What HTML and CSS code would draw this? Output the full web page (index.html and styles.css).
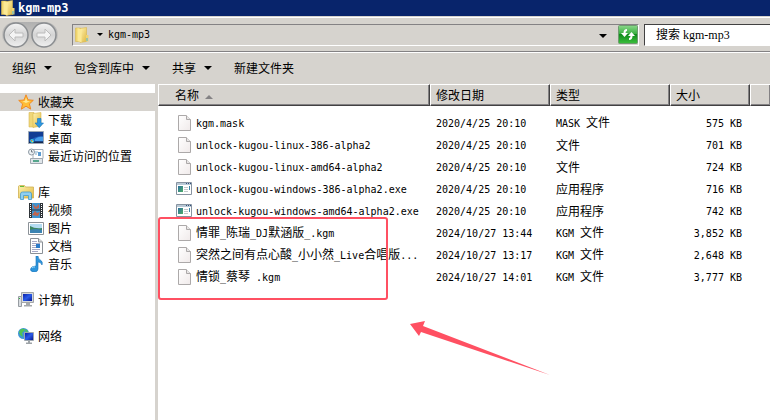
FILE: index.html
```html
<!DOCTYPE html>
<html lang="zh-CN">
<head>
    <meta charset="UTF-8">
    <meta name="viewport" content="width=device-width, initial-scale=1.0">
    <link rel="stylesheet" href="styles.css">
    <title>kgm-mp3</title>
</head>
<body>
    <!-- shared icons -->
    <svg class="icon-defs" aria-hidden="true">
        <defs>
            <linearGradient id="gold" x1="0" y1="0" x2="1" y2="1">
                <stop offset="0" stop-color="#fff3b0"/>
                <stop offset="1" stop-color="#e0b840"/>
            </linearGradient>
            <linearGradient id="screen" x1="0" y1="0" x2="1" y2="1">
                <stop offset="0" stop-color="#0a1fa8"/>
                <stop offset="0.5" stop-color="#2a5be8"/>
                <stop offset="1" stop-color="#0a1a90"/>
            </linearGradient>
            <linearGradient id="paper" x1="0" y1="0" x2="1" y2="1">
                <stop offset="0" stop-color="#ffffff"/>
                <stop offset="1" stop-color="#f0eaea"/>
            </linearGradient>
            <linearGradient id="teal" x1="0" y1="0" x2="1" y2="1">
                <stop offset="0" stop-color="#2a6f9e"/>
                <stop offset="1" stop-color="#4fae68"/>
            </linearGradient>
            <linearGradient id="green" x1="0" y1="0" x2="0" y2="1">
                <stop offset="0" stop-color="#8ad88a"/>
                <stop offset="0.45" stop-color="#3cb043"/>
                <stop offset="0.5" stop-color="#118a1c"/>
                <stop offset="1" stop-color="#3cc03c"/>
            </linearGradient>
            <linearGradient id="knob" x1="0" y1="0" x2="0" y2="1">
                <stop offset="0" stop-color="#f4f4f4"/>
                <stop offset="0.5" stop-color="#d4d4d4"/>
                <stop offset="1" stop-color="#f0f0f0"/>
            </linearGradient>
        </defs>
        <symbol id="folder" viewBox="0 0 16 16">
            <path d="M1.500 1h5v13.500h-5z" fill="#f0d56c" stroke="#d9b852" stroke-width=".6"/>
            <path d="M6 1.500L12.500.500v14L6 15.500z" fill="url(#gold)" stroke="#d8b64c" stroke-width=".6"/>
            <path d="M3.500 1l4 1.500v13l-4-1.500z" fill="#fbe995"/>
            <path d="M12 8h2.500v6.500H12z" fill="#efd472"/>
            <path d="M12.500 11h1v3h-1z" fill="#4bb4d8"/>
        </symbol>
        <symbol id="star" viewBox="0 0 16 16">
            <path d="M8 .8l2 5 5.300.5-3.900 3.600 1.300 5.200L8 12.200 3.300 15.200l1.300-5.300L.700 6.400 6 6z" fill="#ffbd35" stroke="#f08a24"/>
            <path d="M8 3.500L9.200 7 12 7.200 8 9 4.500 7.300 7 7z" fill="#ffe995"/>
        </symbol>
        <symbol id="download" viewBox="0 0 16 16">
            <path d="M1 .5h5V15H1z" fill="#f0d778" stroke="#d6b754" stroke-width=".6"/>
            <path d="M5 1.500L13 .5v13.500L5 15.500z" fill="url(#gold)" stroke="#d8b64c" stroke-width=".6"/>
            <path d="M9.500 6.500h3.500V11h2.500l-4.300 4.700L7 11h2.500z" fill="#2f97e0" stroke="#1876bd" stroke-width=".6"/>
        </symbol>
        <symbol id="desktop" viewBox="0 0 16 16">
            <path d="M.5 1.500h15v12H.5z" fill="#1f62c0" stroke="#9aa6b4"/>
            <path d="M1 2h14v4Q7 6 1 11z" fill="#123d94"/>
            <path d="M7 9q4-3 8-2v4H7z" fill="#459be8"/>
            <path d="M1 11.500h14V13H1z" fill="#16294f"/>
            <circle cx="4" cy="11" r="2" fill="#3ac0d8"/>
            <path d="M3 10h1v1H3z" fill="#f26a2c"/>
            <path d="M4 11h1v1H4z" fill="#ffd93a"/>
        </symbol>
        <symbol id="recent" viewBox="0 0 16 16">
            <path d="M5 1.500h10v9H5z" fill="#fff" stroke="#a6b0ba"/>
            <path d="M7 4h3M7 6h2" stroke="#7fa9c8"/>
            <path d="M10 4h3v4h-3z" fill="#5b9bd0"/>
            <path d="M2.500 10.500h12v5h-12z" fill="#dfe5e9" stroke="#a0a8b0"/>
            <path d="M5 12h6v2H5z" fill="#56a68c"/>
            <circle cx="3.500" cy="4" r="3" fill="#eef2f5" stroke="#8d98a2"/>
            <path d="M3.500 2v2H5" fill="none" stroke="#59646e" stroke-width=".8"/>
        </symbol>
        <symbol id="library" viewBox="0 0 16 16">
            <path d="M.5 3q0-1.500 1-1.500h5l1 1.500h8v11H.5z" fill="url(#gold)" stroke="#cfb052" stroke-width=".8"/>
            <path d="M2 2.500h4" stroke="#62bd3d"/>
            <path d="M2.500 15.500V10q0-2 2-2h7q2 0 2 2v5.500h-3V11.500H5.500v4z" fill="#8fd0f2" stroke="#449acb" stroke-width=".8"/>
        </symbol>
        <symbol id="video" viewBox="0 0 16 16">
            <path d="M1 1h14v15H1z" fill="#2e3338"/>
            <path d="M4 1h8v6.500H4zM4 8.500h8V16H4z" fill="#3f93cf"/>
            <path d="M5 2l3 3 3-3v4l-3 1-2-1zM4 13l3-4 2 2 3-1-2 4z" fill="#c0654f"/>
            <path d="M2.500 2v14M13.500 2v14" stroke="#fff" stroke-dasharray="1 1"/>
        </symbol>
        <symbol id="picture" viewBox="0 0 16 16">
            <path d="M.5 2.500h15v12H.5z" fill="#fff" stroke="#8c9298"/>
            <path d="M2 4h12v9H2z" fill="#b4dcf2"/>
            <path d="M2 6q5 3 12 2v3H2z" fill="#3b8562"/>
            <path d="M2 10q6-2 12 0v3H2z" fill="#3c84b2"/>
        </symbol>
        <symbol id="document" viewBox="0 0 16 16">
            <path d="M2.500.5h8l4 3.500v11.500h-12z" fill="#fff" stroke="#8b9197"/>
            <path d="M10.500.5V4h4" fill="#ddd" stroke="#8b9197"/>
            <path d="M4 3.500h5M4 5.500h8M4 7.500h4M4 9.500h4M4 11.500h8M4 13.500h6" stroke="#a5a8c4"/>
            <path d="M8 6h4v4H8z" fill="#2b7ac8"/>
        </symbol>
        <symbol id="music" viewBox="0 0 16 16">
            <path d="M8 0h2q0 3 3 4.500 2 1.500 1 4.500-1-3-4-3v7q0 3-4 3-4-.5-3.500-3Q3.500 10 8 10z" fill="#2d95dc" stroke="#1a74b8" stroke-width=".6"/>
            <path d="M4 12q1-1.500 3-1" stroke="#9bdcff" fill="none"/>
        </symbol>
        <symbol id="computer" viewBox="0 0 16 16">
            <path d="M.5 4.500h3v10h-3z" fill="#d8dce0" stroke="#979ca2"/>
            <path d="M1 6h1v1H1z" fill="#2fae38"/>
            <path d="M3.500.5h12v10h-12z" fill="#d5d8da" stroke="#a3a6a8"/>
            <path d="M5 2h9v7H5z" fill="url(#screen)"/>
            <path d="M8 11h4v2h2v1.500H6V13h2z" fill="#a6a9ab"/>
        </symbol>
        <symbol id="network" viewBox="0 0 16 16">
            <circle cx="5.500" cy="5.500" r="5.500" fill="#3f95d8"/>
            <path d="M3 1q3-1 4 1L4 5l1 4-3-2-1-3zM7 1l3 2-2 3z" fill="#4fc552"/>
            <path d="M6.500 4.500h9v8h-9z" fill="#dde3ea" stroke="#9ca5af"/>
            <path d="M7 5h8v7H7z" fill="url(#screen)"/>
            <path d="M10 13h2v1.500h2V16H8v-1.500h2z" fill="#9ea3a7"/>
        </symbol>
        <symbol id="file" viewBox="0 0 16 16">
            <path d="M2.500.5H10L14.500 4.500v11h-12z" fill="url(#paper)" stroke="#aca9a9"/>
            <path d="M10.500.5v4h4" fill="#e8e6e6" stroke="#aca9a9"/>
        </symbol>
        <symbol id="exe" viewBox="0 0 16 16">
            <path d="M.5 1.500h15v12H.5z" fill="#fff" stroke="#8793a0"/>
            <path d="M1 2h14v2H1z" fill="#b9c9d6"/>
            <path d="M10 2.500h1M12 2.500h1M14 2.500h1" stroke="#33507c"/>
            <path d="M2 5h5v6H2z" fill="url(#teal)"/>
            <path d="M8 6.500h4M8 8.500h4M8 10.500h4" stroke="#c3c8cc"/>
            <path d="M13 5h1v4h-1z" fill="#3b86a8"/>
        </symbol>
    </svg>

    <div class="window">
        <header class="title-bar">
            <svg class="icon"><use href="#folder"/></svg>
            <span class="en">kgm-mp3</span>
        </header>

        <div class="address-bar">
            <div class="nav-buttons">
                <button type="button" aria-label="后退">
                    <svg viewBox="0 0 26 26"><circle cx="13" cy="13" r="12" fill="url(#knob)" stroke="#8a8d90" stroke-width="1.500"/><path d="M6 13l6-6v4h8v4h-8v4z" fill="#f4f4f4" stroke="#bcbcbc"/></svg>
                </button>
                <button type="button" aria-label="前进">
                    <svg viewBox="0 0 26 26"><circle cx="13" cy="13" r="12" fill="url(#knob)" stroke="#8a8d90" stroke-width="1.500"/><path d="M20 13l-6-6v4H6v4h8v4z" fill="#f4f4f4" stroke="#bcbcbc"/></svg>
                </button>
            </div>
            <div class="path-box">
                <svg class="icon"><use href="#folder"/></svg>
                <button type="button" class="crumb"><span class="arrow small"></span><span class="en">kgm-mp3</span></button>
                <button type="button" class="history" aria-label="以前的位置"><span class="arrow"></span></button>
                <button type="button" class="refresh" aria-label="刷新">
                    <svg viewBox="0 0 20 19"><rect x=".5" y=".5" width="19" height="18" rx="1" fill="url(#green)" stroke="#6f9a70"/><path d="M9 4Q5.500 4 5.500 8H3l3.500 4L10 8H7.500Q7.500 6 9 6zM11 15q3.500 0 3.500-4H17l-3.500-4L10 11h2.500q0 2-1.500 2z" fill="#fff"/></svg>
                </button>
            </div>
            <input type="text" class="search" aria-label="搜索" placeholder="搜索 kgm-mp3">
        </div>

        <div class="toolbar">
            <button type="button">组织<span class="arrow"></span></button>
            <button type="button">包含到库中<span class="arrow"></span></button>
            <button type="button">共享<span class="arrow"></span></button>
            <button type="button">新建文件夹</button>
        </div>

        <div class="content">
            <nav class="sidebar">
                <div class="group">
                    <a href="#" class="parent selected"><svg class="icon"><use href="#star"/></svg>收藏夹</a>
                    <a href="#"><svg class="icon"><use href="#download"/></svg>下载</a>
                    <a href="#"><svg class="icon"><use href="#desktop"/></svg>桌面</a>
                    <a href="#"><svg class="icon"><use href="#recent"/></svg>最近访问的位置</a>
                </div>
                <div class="group">
                    <a href="#" class="parent"><svg class="icon"><use href="#library"/></svg>库</a>
                    <a href="#"><svg class="icon"><use href="#video"/></svg>视频</a>
                    <a href="#"><svg class="icon"><use href="#picture"/></svg>图片</a>
                    <a href="#"><svg class="icon"><use href="#document"/></svg>文档</a>
                    <a href="#"><svg class="icon"><use href="#music"/></svg>音乐</a>
                </div>
                <div class="group">
                    <a href="#" class="parent"><svg class="icon"><use href="#computer"/></svg>计算机</a>
                </div>
                <div class="group">
                    <a href="#" class="parent"><svg class="icon"><use href="#network"/></svg>网络</a>
                </div>
            </nav>

            <main class="files">
                <table>
                    <colgroup>
                        <col class="col-name">
                        <col class="col-date">
                        <col class="col-type">
                        <col class="col-size">
                        <col>
                    </colgroup>
                    <thead>
                        <tr>
                            <th class="name-head">名称<span class="sort"></span></th>
                            <th>修改日期</th>
                            <th>类型</th>
                            <th>大小</th>
                            <th></th>
                        </tr>
                    </thead>
                    <tbody>
                        <tr>
                            <td><div class="name"><svg class="icon"><use href="#file"/></svg><span><span class="en">kgm.mask</span></span></div></td>
                            <td><span class="en">2020/4/25 20:10</span></td>
                            <td><span class="en">MASK </span>文件</td>
                            <td class="size"><span class="en">575 KB</span></td>
                            <td></td>
                        </tr>
                        <tr>
                            <td><div class="name"><svg class="icon"><use href="#file"/></svg><span><span class="en">unlock-kugou-linux-386-alpha2</span></span></div></td>
                            <td><span class="en">2020/4/25 20:10</span></td>
                            <td>文件</td>
                            <td class="size"><span class="en">701 KB</span></td>
                            <td></td>
                        </tr>
                        <tr>
                            <td><div class="name"><svg class="icon"><use href="#file"/></svg><span><span class="en">unlock-kugou-linux-amd64-alpha2</span></span></div></td>
                            <td><span class="en">2020/4/25 20:10</span></td>
                            <td>文件</td>
                            <td class="size"><span class="en">724 KB</span></td>
                            <td></td>
                        </tr>
                        <tr>
                            <td><div class="name"><svg class="icon"><use href="#exe"/></svg><span><span class="en">unlock-kugou-windows-386-alpha2.exe</span></span></div></td>
                            <td><span class="en">2020/4/25 20:10</span></td>
                            <td>应用程序</td>
                            <td class="size"><span class="en">716 KB</span></td>
                            <td></td>
                        </tr>
                        <tr>
                            <td><div class="name"><svg class="icon"><use href="#exe"/></svg><span><span class="en">unlock-kugou-windows-amd64-alpha2.exe</span></span></div></td>
                            <td><span class="en">2020/4/25 20:10</span></td>
                            <td>应用程序</td>
                            <td class="size"><span class="en">742 KB</span></td>
                            <td></td>
                        </tr>
                        <tr>
                            <td><div class="name"><svg class="icon"><use href="#file"/></svg><span>情罪<span class="en">_</span>陈瑞<span class="en">_DJ</span>默涵版<span class="en">_.kgm</span></span></div></td>
                            <td><span class="en">2024/10/27 13:44</span></td>
                            <td><span class="en">KGM </span>文件</td>
                            <td class="size"><span class="en">3,852 KB</span></td>
                            <td></td>
                        </tr>
                        <tr>
                            <td><div class="name"><svg class="icon"><use href="#file"/></svg><span>突然之间有点心酸<span class="en">_</span>小小然<span class="en">_Live</span>合唱版<span class="en">...</span></span></div></td>
                            <td><span class="en">2024/10/27 13:17</span></td>
                            <td><span class="en">KGM </span>文件</td>
                            <td class="size"><span class="en">2,648 KB</span></td>
                            <td></td>
                        </tr>
                        <tr>
                            <td><div class="name"><svg class="icon"><use href="#file"/></svg><span>情锁<span class="en">_</span>蔡琴<span class="en"> .kgm</span></span></div></td>
                            <td><span class="en">2024/10/27 14:01</span></td>
                            <td><span class="en">KGM </span>文件</td>
                            <td class="size"><span class="en">3,777 KB</span></td>
                            <td></td>
                        </tr>
                    </tbody>
                </table>
                <!-- red marks drawn over the list -->
                <div class="mark-box"></div>
                <svg class="mark-arrow" viewBox="0 0 142 56"><path d="M0 3L15 0l-2 5 127 49L11 11l-2 4z"/></svg>
            </main>
        </div>
    </div>
</body>
</html>
```

FILE: styles.css
```css
* {
    box-sizing: border-box;
}

body {
    margin: 0;
    background-color: #fff;
    color: #000;
    font-family: "Noto Sans CJK SC", sans-serif;
    font-size: 12px;
    line-height: 18px;
}

button {
    padding: 0;
    border: none;
    background: none;
    color: inherit;
    font: inherit;
    cursor: pointer;
}

.icon-defs {
    position: absolute;
    width: 0;
    height: 0;
}

.icon {
    width: 16px;
    height: 16px;
    flex: none;
}

/* latin text sits at half the width of a chinese character */
.en {
    font-family: "DejaVu Sans Mono", monospace;
    font-size: 10px;
    white-space: pre;
}

.window {
    display: flex;
    flex-direction: column;
    min-height: 100vh;
}

.title-bar {
    display: flex;
    align-items: center;
    gap: 2px;
    height: 16px;
    background-color: #08246b;
    color: #fff;
    font-weight: bold;
}

.title-bar .en {
    font-size: 12px;
    line-height: 16px;
}

.address-bar {
    display: flex;
    align-items: center;
    height: 37px;
    background-color: #d6d3ce;
    border-top: 1px solid #d6d3ce;
    border-bottom: 1px solid #fff;
    box-shadow: inset 0 1px #fff, inset 0 -1px #848284;
}

.nav-buttons {
    display: flex;
    gap: 2px;
    margin: 0 14px 0 2px;
    padding: 0 1px;
    border-radius: 14px;
    background-image: linear-gradient(#b0b0b0, #d6d3ce);
}

.nav-buttons button,
.nav-buttons svg {
    display: block;
    width: 26px;
    height: 26px;
}

.path-box {
    display: flex;
    flex: 1;
    align-items: center;
    height: 22px;
    padding-left: 1px;
    border: 1px solid;
    border-color: #848284 #fff #fff #848284;
}

.crumb {
    display: flex;
    align-items: center;
    gap: 5px;
    margin-left: 7px;
}

.history {
    margin-left: auto;
    padding: 0 11px;
}

.refresh,
.refresh svg {
    display: block;
    width: 20px;
    height: 19px;
}

.search {
    width: 126px;
    height: 22px;
    margin-left: 5px;
    padding: 2px 11px 0;
    border: 1px solid;
    border-color: #424142 #fff #fff #424142;
    border-right: none;
    border-radius: 0;
    background-color: #fff;
    font-family: "Liberation Serif", "Noto Sans CJK SC", serif;
    font-size: 12px;
}

.search::placeholder {
    color: #000;
    opacity: 1;
}

.arrow {
    display: inline-block;
    border: 4px solid transparent;
    border-top-color: #000;
    border-bottom: none;
    vertical-align: middle;
}

.arrow.small {
    border-width: 3px;
    border-bottom: none;
}

.toolbar {
    display: flex;
    align-items: center;
    gap: 22px;
    height: 31px;
    padding: 0 12px 2px;
    background-color: #d6d3ce;
}

.toolbar button {
    display: flex;
    align-items: center;
    gap: 8px;
}

.content {
    display: flex;
    flex: 1;
}

.sidebar {
    display: flex;
    flex-direction: column;
    gap: 18px;
    width: 158px;
    padding-top: 9px;
    border-right: 3px solid #d6d3ce;
}

.sidebar a {
    display: flex;
    align-items: center;
    gap: 4px;
    height: 18px;
    padding-left: 28px;
    color: #000;
    text-decoration: none;
}

.sidebar .parent {
    padding-left: 18px;
}

.sidebar .selected {
    background-color: #d6d3ce;
}

.files {
    position: relative;
    flex: 1;
}

table {
    width: 100%;
    table-layout: fixed;
    border-collapse: separate;
    border-spacing: 0;
}

.col-name {
    width: 272px;
}

.col-date,
.col-type {
    width: 120px;
}

.col-size {
    width: 80px;
}

th {
    height: 22px;
    padding: 0 5px;
    border: 1px solid;
    border-color: #fff #424142 #424142 #fff;
    background-color: #d6d3ce;
    box-shadow: inset -1px -1px #848284;
    font-weight: normal;
    text-align: left;
}

th:last-child {
    border-right: none;
}

th.name-head {
    padding-left: 16px;
}

.sort {
    display: inline-block;
    margin-left: 6px;
    border: 4px solid transparent;
    border-top: none;
    border-bottom-color: #848284;
    vertical-align: middle;
}

/* space between the header and the first file */
tbody::before {
    content: "";
    display: block;
    height: 6px;
}

td {
    height: 22px;
    padding: 0 6px;
    white-space: nowrap;
}

td:first-child {
    padding: 0 0 0 18px;
}

.name {
    display: flex;
    align-items: center;
    gap: 4px;
}

td.size {
    padding-right: 8px;
    text-align: right;
}

.mark-box {
    position: absolute;
    top: 133px;
    left: 0;
    width: 230px;
    height: 83px;
    border: 2px solid #ff5062;
    border-radius: 3px;
}

.mark-arrow {
    position: absolute;
    top: 237px;
    left: 252px;
    width: 142px;
    height: 56px;
    fill: #ff5062;
}
```
